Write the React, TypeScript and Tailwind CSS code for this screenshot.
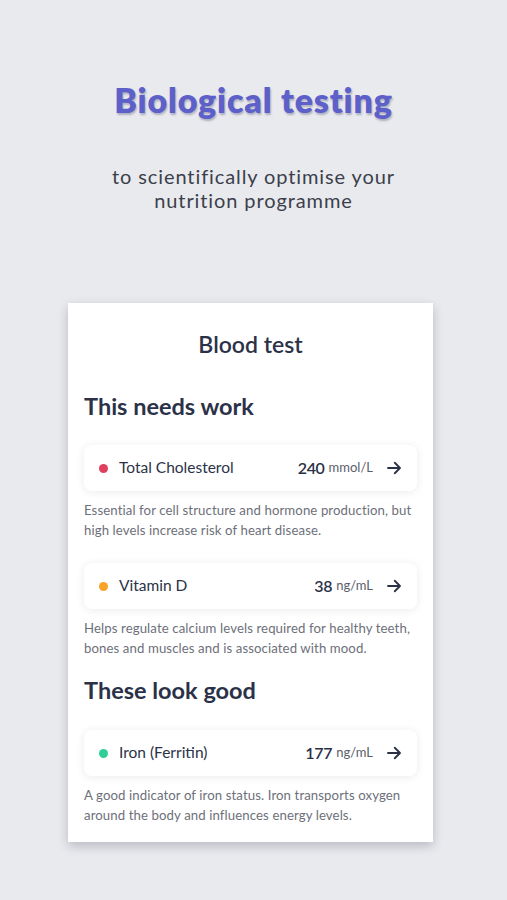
import React from 'react';

interface Marker {
  name: string;
  value: string;
  unit: string;
  dot: string;
  note: string;
}

const needsWork: Marker[] = [
  {
    name: 'Total Cholesterol',
    value: '240',
    unit: 'mmol/L',
    dot: 'bg-[#e0405e]',
    note: 'Essential for cell structure and hormone production, but high levels increase risk of heart disease.',
  },
  {
    name: 'Vitamin D',
    value: '38',
    unit: 'ng/mL',
    dot: 'bg-[#f7a325]',
    note: 'Helps regulate calcium levels required for healthy teeth, bones and muscles and is associated with mood.',
  },
];

const looksGood: Marker[] = [
  {
    name: 'Iron (Ferritin)',
    value: '177',
    unit: 'ng/mL',
    dot: 'bg-[#2fcf95]',
    note: 'A good indicator of iron status. Iron transports oxygen around the body and influences energy levels.',
  },
];

const Arrow = () => (
  <svg width="18" height="18" viewBox="0 0 24 24" fill="none" stroke="#2b3248" strokeWidth="2.4" strokeLinecap="round" strokeLinejoin="round">
    <path d="M4 12h15" />
    <path d="M13 5l7 7-7 7" />
  </svg>
);

const MarkerRow: React.FC<{ m: Marker }> = ({ m }) => (
  <div>
    <div className="flex items-center h-[46px] rounded-lg bg-white shadow-[0_1px_8px_rgba(30,35,60,0.09)] pl-[15px] pr-[14px]">
      <span className={`w-[9px] h-[9px] rounded-full ${m.dot}`}></span>
      <span className="ml-[11px] text-[15.5px] text-[#2b3248]">{m.name}</span>
      <span className="ml-auto text-[16px] font-semibold text-[#2b3248] tracking-[-0.3px]">{m.value}</span>
      <span className="ml-[4px] text-[13px] text-[#5a5e6b]">{m.unit}</span>
      <span className="ml-[12px] flex items-center"><Arrow /></span>
    </div>
    <p className="mt-[9px] text-[13.2px] leading-[20px] text-[#6d707a] tracking-[0.1px]">{m.note}</p>
  </div>
);

export default function App() {
  return (
    <div className="min-h-[900px] w-full bg-[#e9eaee] flex flex-col items-center" style={{ fontFamily: 'Lato, "Noto Sans", sans-serif' }}>
      <h1 className="mt-[80px] text-[34px] leading-[40px] font-extrabold text-[#5c60c8] tracking-[0.8px] [text-shadow:1px_2px_2px_rgba(40,40,90,0.3)]">
        Biological testing
      </h1>
      <p className="mt-[44px] text-center text-[20px] leading-[24px] text-[#3b3f4b] tracking-[0.9px]">
        to scientifically optimise your
        <br />
        nutrition programme
      </p>

      <div className="mt-[91px] mr-[6px] w-[365px] bg-white shadow-[0_4px_10px_rgba(20,25,40,0.22)] px-[16px] pt-[27px] pb-[17px]">
        <h2 className="text-center text-[23px] leading-[28px] font-semibold text-[#2b3248]">Blood test</h2>

        <h3 className="mt-[34px] text-[23.5px] leading-[28px] font-bold text-[#2b3248]">This needs work</h3>
        <div className="mt-[25px] flex flex-col gap-[23px]">
          {needsWork.map((m) => (
            <MarkerRow key={m.name} m={m} />
          ))}
        </div>

        <h3 className="mt-[18px] text-[23.5px] leading-[28px] font-bold text-[#2b3248]">These look good</h3>
        <div className="mt-[26px] flex flex-col gap-[23px]">
          {looksGood.map((m) => (
            <MarkerRow key={m.name} m={m} />
          ))}
        </div>
      </div>
    </div>
  );
}
